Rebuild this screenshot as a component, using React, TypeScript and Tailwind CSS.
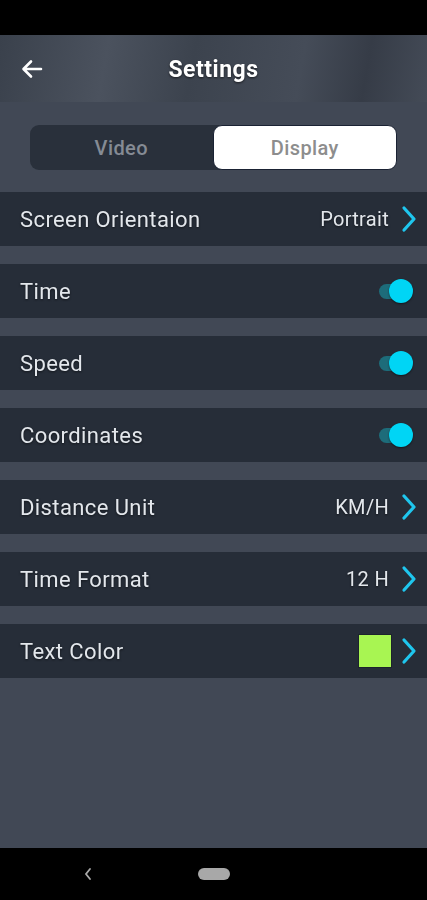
import * as React from "react";

type Row =
  | { label: string; kind: "value"; value: string }
  | { label: string; kind: "toggle"; on: boolean }
  | { label: string; kind: "color"; color: string };

const rows: Row[] = [
  { label: "Screen Orientaion", kind: "value", value: "Portrait" },
  { label: "Time", kind: "toggle", on: true },
  { label: "Speed", kind: "toggle", on: true },
  { label: "Coordinates", kind: "toggle", on: true },
  { label: "Distance Unit", kind: "value", value: "KM/H" },
  { label: "Time Format", kind: "value", value: "12 H" },
  { label: "Text Color", kind: "color", color: "#a8f552" },
];

function Chevron() {
  return (
    <svg width="18" height="28" viewBox="0 0 18 28" className="shrink-0">
      <path
        d="M4 3 L14 14 L4 25"
        fill="none"
        stroke="#1fc6ee"
        strokeWidth="3.2"
        strokeLinecap="round"
        strokeLinejoin="round"
      />
    </svg>
  );
}

function Toggle({ on }: { on: boolean }) {
  return (
    <div className="relative w-[36px] h-[24px] flex items-center">
      <div
        className={`ml-[2px] w-[28px] h-[15px] rounded-full ${
          on ? "bg-[#1d6c7a]" : "bg-[#5a6270]"
        }`}
      />
      <div
        className={`absolute top-0 w-[24px] h-[24px] rounded-full shadow-[0_1px_2px_rgba(0,0,0,0.5)] ${
          on ? "right-0 bg-[#00d5f5]" : "left-0 bg-[#cfd3d8]"
        }`}
      />
    </div>
  );
}

export default function App() {
  const [tab, setTab] = React.useState<"video" | "display">("display");

  return (
    <div
      className="w-[427px] h-[900px] flex flex-col bg-[#414855] overflow-hidden"
      style={{ fontFamily: "Roboto, 'Noto Sans', sans-serif" }}
    >
      {/* status bar */}
      <div className="h-[35px] bg-black shrink-0" />

      {/* header */}
      <div className="relative h-[67px] shrink-0 flex items-center justify-center pt-[3px] bg-[linear-gradient(100deg,#3a414c_0%,#4b525e_25%,#3c434e_45%,#454c58_70%,#363c47_85%,#444b57_100%)]">
        <button className="absolute left-[20px] top-[22px] w-[24px] h-[24px] flex items-center justify-center">
          <svg width="22" height="20" viewBox="0 0 22 20">
            <path
              d="M20 10 H3 M10 2.5 L2.5 10 L10 17.5"
              fill="none"
              stroke="#ffffff"
              strokeWidth="2.6"
              strokeLinecap="round"
              strokeLinejoin="round"
            />
          </svg>
        </button>
        <h1 className="text-white text-[23px] font-bold tracking-[0.5px] drop-shadow-[0_1px_1px_rgba(0,0,0,0.6)]">
          Settings
        </h1>
      </div>

      {/* tabs */}
      <div className="pt-[23px] pb-[22px] px-[30px] shrink-0">
        <div className="flex h-[45px] rounded-[9px] bg-[#29303b] overflow-hidden">
          <button
            onClick={() => setTab("video")}
            className={`flex-1 flex items-center justify-center text-[20px] font-medium tracking-[0.4px] rounded-[9px] ${
              tab === "video" ? "bg-white text-[#8d8d8d]" : "text-[#858b94]"
            }`}
          >
            Video
          </button>
          <button
            onClick={() => setTab("display")}
            className={`flex-1 flex items-center justify-center text-[20px] font-medium tracking-[0.4px] rounded-[9px] ${
              tab === "display"
                ? "bg-white text-[#8d8d8d] border border-[#1a2233]"
                : "text-[#858b94]"
            }`}
          >
            Display
          </button>
        </div>
      </div>

      {/* rows */}
      <div className="flex flex-col gap-[18px]">
        {rows.map((row) => (
          <div
            key={row.label}
            className="h-[54px] bg-[#262d38] flex items-center pl-[20px] pr-[9px]"
          >
            <span className="flex-1 text-[22px] tracking-[0.4px] text-[#e3e7ec] drop-shadow-[0_1px_1px_rgba(0,0,0,0.5)]">
              {row.label}
            </span>
            {row.kind === "value" && (
              <div className="flex items-center gap-[11px]">
                <span className="text-[20px] tracking-[0.3px] text-[#e3e7ec] drop-shadow-[0_1px_1px_rgba(0,0,0,0.5)]">
                  {row.value}
                </span>
                <Chevron />
              </div>
            )}
            {row.kind === "toggle" && (
              <div className="pr-[5px]">
                <Toggle on={row.on} />
              </div>
            )}
            {row.kind === "color" && (
              <div className="flex items-center gap-[8px]">
                <div
                  className="w-[34px] h-[34px] border border-[#1c232c]"
                  style={{ backgroundColor: row.color }}
                />
                <Chevron />
              </div>
            )}
          </div>
        ))}
      </div>

      <div className="flex-1" />

      {/* nav bar */}
      <div className="h-[52px] bg-black shrink-0 flex items-center relative">
        <svg
          width="10"
          height="14"
          viewBox="0 0 10 14"
          className="absolute left-[83px] top-[19px]"
        >
          <path
            d="M7 2 L3 7 L7 12"
            fill="none"
            stroke="#a9a9a9"
            strokeWidth="1.8"
            strokeLinecap="round"
          />
        </svg>
        <div className="absolute left-[198px] top-[20px] w-[32px] h-[12px] rounded-full bg-[#a8a8a8]" />
      </div>
    </div>
  );
}
